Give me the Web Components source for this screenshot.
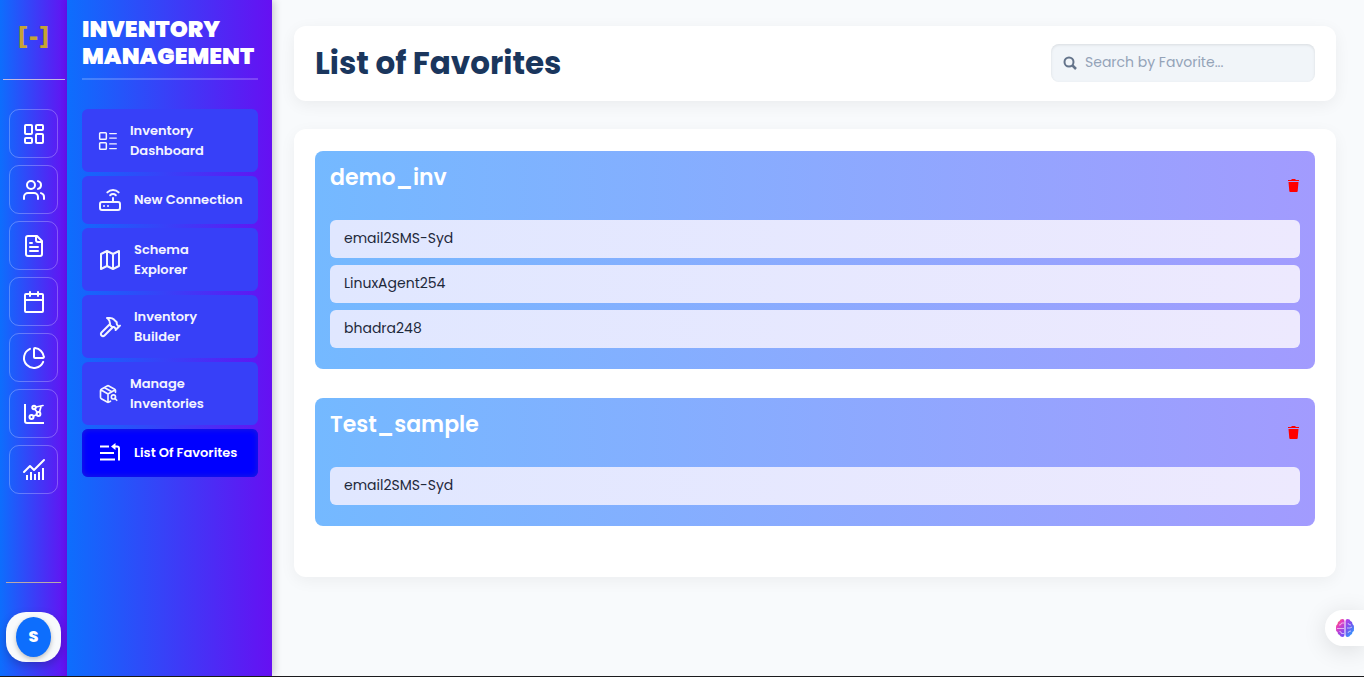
<!DOCTYPE html>
<html lang="en">
<head>
<meta charset="utf-8">
<meta name="viewport" content="width=device-width, initial-scale=1">
<title>Inventory Management</title>
<style>
html, body { margin: 0; }
body { font-family: Poppins, Inter, "Open Sans", sans-serif; background: #f8fafc; color: #1e293b; }
</style>
</head>
<body>
<inv-app>
  <inv-rail slot="rail">
    <rail-link label="Dashboard" icon="dashboard"></rail-link>
    <rail-link label="Users" icon="users"></rail-link>
    <rail-link label="Documents" icon="file"></rail-link>
    <rail-link label="Calendar" icon="calendar"></rail-link>
    <rail-link label="Reports" icon="pie"></rail-link>
    <rail-link label="Network" icon="network"></rail-link>
    <rail-link label="Analytics" icon="bars"></rail-link>
  </inv-rail>
  <inv-menu slot="menu">
    <menu-link icon="list" size="small" lines="2">Inventory Dashboard</menu-link>
    <menu-link icon="router">New Connection</menu-link>
    <menu-link icon="map" lines="2">Schema Explorer</menu-link>
    <menu-link icon="hammer" lines="2">Inventory Builder</menu-link>
    <menu-link icon="package" size="small" lines="2">Manage Inventories</menu-link>
    <menu-link icon="favorites" current>List Of Favorites</menu-link>
  </inv-menu>
  <page-header>List of Favorites</page-header>
  <favorite-board>
    <favorite-group name="demo_inv">
      <favorite-item>email2SMS-Syd</favorite-item>
      <favorite-item>LinuxAgent254</favorite-item>
      <favorite-item>bhadra248</favorite-item>
    </favorite-group>
    <favorite-group name="Test_sample">
      <favorite-item>email2SMS-Syd</favorite-item>
    </favorite-group>
  </favorite-board>
  <assistant-tab slot="assistant"></assistant-tab>
</inv-app>

<script>
const stroke = (body, w = 2) => `<svg viewBox="0 0 24 24" fill="none" stroke="currentColor" stroke-width="${w}" stroke-linecap="round" stroke-linejoin="round" aria-hidden="true">${body}</svg>`;
const ICONS = {
  dashboard: stroke('<rect x="3" y="3" width="7" height="9" rx="1"/><rect x="14" y="3" width="7" height="5" rx="1"/><rect x="14" y="12" width="7" height="9" rx="1"/><rect x="3" y="16" width="7" height="5" rx="1"/>'),
  users: stroke('<path d="M16 21v-2a4 4 0 0 0-4-4H6a4 4 0 0 0-4 4v2"/><circle cx="9" cy="7" r="4"/><path d="M22 21v-2a4 4 0 0 0-3-3.87M16 3.13a4 4 0 0 1 0 7.75"/>'),
  file: stroke('<path d="M15 2H6a2 2 0 0 0-2 2v16a2 2 0 0 0 2 2h12a2 2 0 0 0 2-2V7zM14 2v4a2 2 0 0 0 2 2h4M10 9H8M16 13H8M16 17H8"/>'),
  calendar: stroke('<rect x="3" y="4" width="18" height="18" rx="1"/><path d="M8 2v4M16 2v4M3 10h18"/>'),
  pie: stroke('<path d="M21 12c.6 0 1-.5.9-1A10 10 0 0 0 13 2.100c-.5 0-1 .4-1 .9v8a1 1 0 0 0 1 1z"/><path d="M21.200 15.900A10 10 0 1 1 8 2.800"/>'),
  network: stroke('<path d="M3 2v17q0 2 2 2h17" stroke-linecap="butt"/><circle cx="12" cy="5.500" r="1.700"/><circle cx="9.500" cy="15" r="2"/><circle cx="16.500" cy="12" r="1.900"/><path d="M14 5l7-1.500M13 7.500l2.500 3M11.500 14l3-1.200M17.500 10l1.500-5.500" stroke-width="1.700"/>'),
  bars: stroke('<path d="M2 14l6-6 4 4L22 2"/><path d="M5 17v5M9 14v8M13 16v6M17 14v8M21 10v12" stroke-linecap="butt"/>'),
  list: stroke('<rect x="2" y="2" width="8" height="8" rx="1"/><rect x="2" y="14" width="8" height="8" rx="1"/><path d="M14 3h8M14 8.500h8M14 15.500h8M14 21h8" stroke-width="1.500"/>', 1.8),
  router: stroke('<rect x="2" y="14" width="20" height="8" rx="2"/><path d="M6 18h.01M10 18h.01M15 10v4M17.840 7.170a4 4 0 0 0-5.660 0M20.660 4.340a8 8 0 0 0-11.310 0"/>'),
  map: stroke('<path d="M3 6l6-3 6 3 6-3v15l-6 3-6-3-6 3zM9 3v15M15 6v15"/>'),
  hammer: stroke('<path d="M15 12l-8.500 8.500a2.100 2.100 0 1 1-3-3L12 9M17.600 15L22 10.600M20.900 11.700l-1.300-1.300c-.6-.6-.9-1.300-.9-2.200v-.9L16 4.600A6 6 0 0 0 11.800 3H9l1 .8A6 6 0 0 1 12 8.400v1.600l2 2h2l2 2"/>'),
  package: stroke('<path d="M21 10V8a2 2 0 0 0-1-1.700l-7-4a2 2 0 0 0-2 0l-7 4A2 2 0 0 0 3 8v8a2 2 0 0 0 1 1.700l7 4a2 2 0 0 0 2 0l2-1.100M7.500 4.300l9 5.100M3.300 7L12 12l8.700-5M12 22V12"/><circle cx="18.500" cy="15.500" r="2.500"/><path d="M20.300 17.300L22.500 19.500"/>'),
  favorites: stroke('<path d="M2 5.500h9M2 12h14M2 18.500h15M16 5.500h3q2 0 2 2v12" stroke-linecap="butt"/><path d="M17.500 2l-4.500 3.500 4.500 3.500z" fill="currentColor" stroke="none"/>')
};

class Base extends HTMLElement {
  connectedCallback() {
    if (this.shadowRoot) return;
    this.attachShadow({ mode: "open" }).innerHTML = this.render();
  }
}

customElements.define("inv-app", class extends Base {
  render() {
    return `<style>
      :host { box-sizing: border-box; display: grid; grid-template-columns: 67px 205px minmax(0, 1fr); min-height: 100vh; border-bottom: 1px solid #1b1b1d; background: #f8fafc; }
      nav { display: grid; grid-template-columns: minmax(0, 1fr); background: linear-gradient(90deg, #0d6efd, #6610f2); }
      .menu { box-shadow: 2px 0 8px rgba(0, 0, 0, .2); }
      main { padding: 26px 28px 26px 22px; display: flex; flex-direction: column; gap: 28px; }
    </style>
    <nav aria-label="Main"><slot name="rail"></slot></nav>
    <nav class="menu" aria-label="Inventory"><slot name="menu"></slot></nav>
    <main><slot></slot></main>
    <slot name="assistant"></slot>`;
  }
});

customElements.define("inv-rail", class extends Base {
  render() {
    return `<style>
      :host { display: flex; flex-direction: column; align-items: center; }
      .logo { box-sizing: border-box; width: 62px; height: 80px; padding-top: 24px; border-bottom: 1px solid #c4b8e0; text-align: center; font: 700 24px/26px "DejaVu Sans", sans-serif; color: #c6a433; }
      .links { display: flex; flex-direction: column; gap: 7px; margin-top: 29px; }
      .user { margin-top: auto; padding: 29px 0 14px; border-top: 1px solid #b9a9a9; }
      button { display: grid; place-items: center; width: 55px; height: 50px; padding: 0; border: 0; border-radius: 20px; background: #f8fafc; box-shadow: 0 4px 10px rgba(0, 0, 0, .2); }
      button span { display: grid; place-items: center; width: 35px; height: 40px; border-radius: 50%; background: #0d6efd; color: #fff; font: 800 16px/24px Poppins, Inter, sans-serif; box-shadow: 0 2px 5px rgba(0, 0, 0, .25); }
    </style>
    <div class="logo">[-]</div>
    <div class="links"><slot></slot></div>
    <div class="user"><button type="button" aria-label="Account"><span>S</span></button></div>`;
  }
});

customElements.define("rail-link", class extends Base {
  render() {
    return `<style>
      :host { display: block; }
      a { box-sizing: border-box; display: grid; place-items: center; width: 49px; height: 49px; border: 1px solid rgba(255, 255, 255, .27); border-radius: 10px; color: #fff; }
      svg { width: 24px; height: 24px; }
    </style>
    <a href="#" aria-label="${this.getAttribute("label")}">${ICONS[this.getAttribute("icon")]}</a>`;
  }
});

customElements.define("inv-menu", class extends Base {
  render() {
    return `<style>
      :host { display: block; padding: 16px 14px 16px 15px; }
      h2 { margin: 0; padding-bottom: 8px; border-bottom: 2px solid rgba(255, 255, 255, .2); font-size: 23px; line-height: 27px; font-weight: 900; color: #fff; }
      .links { display: flex; flex-direction: column; gap: 4px; margin-top: 29px; }
    </style>
    <h2>INVENTORY MANAGEMENT</h2>
    <div class="links"><slot></slot></div>`;
  }
});

customElements.define("menu-link", class extends Base {
  render() {
    return `<style>
      :host { display: block; }
      a { box-sizing: border-box; display: flex; align-items: center; gap: 12px; min-height: 48px; padding: 4px 8px 4px 16px; border-radius: 6px; background: #3740f8; color: #f3f4ff; text-decoration: none; font-size: 13px; line-height: 20px; font-weight: 600; white-space: nowrap; }
      :host([lines="2"]) a { min-height: 63px; padding-right: 32px; white-space: normal; }
      :host([current]) a { background: #0000ff; color: #fff; box-shadow: inset 0 0 6px #2020d8; }
      svg { flex: none; width: 24px; height: 24px; }
      :host([size="small"]) svg { width: 20px; height: 20px; }
    </style>
    <a href="#"${this.hasAttribute("current") ? ' aria-current="page"' : ""}>${ICONS[this.getAttribute("icon")]}<span><slot></slot></span></a>`;
  }
});

customElements.define("page-header", class extends Base {
  render() {
    return `<style>
      :host { box-sizing: border-box; display: flex; align-items: center; justify-content: space-between; gap: 20px; min-height: 75px; padding: 11px 21px 13px; border-radius: 12px; background: #fff; box-shadow: 0 4px 16px rgba(0, 0, 0, .06); }
      h1 { margin: 0; font-size: 31px; line-height: 40px; font-weight: 700; color: #1a365d; }
      label { box-sizing: border-box; display: flex; align-items: center; gap: 8px; flex: 0 1 264px; min-width: 0; height: 38px; padding: 0 12px; border-radius: 8px; background: #f1f5f9; box-shadow: inset 0 1px 3px rgba(0, 0, 0, .1); color: #64748b; }
      svg { flex: none; width: 14px; height: 14px; }
      input { width: 100%; min-width: 0; padding: 0 0 2px; border: 0; outline: 0; background: none; font: 400 14px/24px Poppins, Inter, sans-serif; color: #1e293b; }
      input::placeholder { color: #94a3b8; opacity: 1; }
    </style>
    <h1><slot></slot></h1>
    <label><svg viewBox="0 0 14 14" fill="none" stroke="currentColor" stroke-width="2" aria-hidden="true"><circle cx="6" cy="6" r="4.500"/><path d="M9 9l4 4" stroke-width="2.500"/></svg>
      <input type="text" aria-label="Search by Favorite" placeholder="Search by Favorite..."></label>`;
  }
});

customElements.define("favorite-board", class extends Base {
  render() {
    return `<style>
      :host { display: flex; flex-direction: column; gap: 29px; padding: 22px 21px 51px; border-radius: 12px; background: #fff; box-shadow: 0 4px 16px rgba(0, 0, 0, .05); }
    </style><slot></slot>`;
  }
});

customElements.define("favorite-group", class extends Base {
  render() {
    return `<style>
      :host { display: block; padding: 0 15px 21px; border-radius: 8px; background: linear-gradient(90deg, #74b9ff, #a29bfe); }
      header { display: flex; align-items: center; justify-content: space-between; height: 69px; }
      h2 { margin: 0; padding-bottom: 16px; font-size: 22px; line-height: 28px; font-weight: 600; color: #fff; }
      button { display: grid; padding: 0; border: 0; background: none; color: #f00; }
      svg { width: 14px; height: 14px; }
      .items { display: flex; flex-direction: column; gap: 7px; }
    </style>
    <header><h2>${this.getAttribute("name")}</h2>
      <button type="button" aria-label="Delete ${this.getAttribute("name")}"><svg viewBox="0 0 14 14" fill="currentColor" aria-hidden="true"><path d="M2 1h3.500V0h4v1H13v1H2zM2.500 3h10l-.8 9q0 1-1 1H4.300q-1 0-1-1z"/></svg></button>
    </header>
    <div class="items" role="list"><slot></slot></div>`;
  }
});

customElements.define("favorite-item", class extends Base {
  render() {
    this.setAttribute("role", "listitem");
    return `<style>
      :host { display: block; padding: 6px 14px 8px; border-radius: 6px; background: linear-gradient(90deg, #e0e7ff, #ede9fe); font-size: 14px; line-height: 24px; font-weight: 400; color: #1e293b; }
    </style><slot></slot>`;
  }
});

customElements.define("assistant-tab", class extends Base {
  render() {
    return `<style>
      :host { position: fixed; right: 0; bottom: 31px; }
      button { display: flex; align-items: center; width: 39px; height: 36px; padding: 0 0 0 10px; border: 0; border-radius: 18px 0 0 18px; background: #fff; box-shadow: 0 4px 24px rgba(0, 0, 0, .12); }
      svg { width: 20px; height: 20px; }
    </style>
    <button type="button" aria-label="Open assistant"><svg viewBox="0 0 20 20" aria-hidden="true">
      <defs><linearGradient id="l" x1="0" y1="0" x2=".6" y2="1"><stop offset="0" stop-color="#ff8a2a"/><stop offset=".4" stop-color="#e63bbd"/><stop offset="1" stop-color="#7a4df5"/></linearGradient>
      <linearGradient id="r" x1="0" y1="0" x2=".6" y2="1"><stop offset="0" stop-color="#c23be6"/><stop offset=".5" stop-color="#7355ee"/><stop offset="1" stop-color="#2f9bff"/></linearGradient></defs>
      <path fill="url(#l)" d="M9.500 3Q9.500 1 7.500 1 5 1 4.500 3 2.500 3.500 2.500 6 .5 7.500 1 10q-.5 3 1.500 4 0 2.500 2 3Q5.500 19 7.500 19q2 0 2-2z"/>
      <path fill="url(#r)" d="M10.500 3q0-2 2-2Q15 1 15.500 3q2 .5 2 3 2 1.500 1.500 4 .5 3-1.500 4 0 2.500-2 3-1 2-3 2-2 0-2-2z"/>
      <path fill="none" stroke="#fff" stroke-width="1" stroke-opacity=".6" d="M4 7q2 .5 2.500-2H9M2 10.500h7M4.500 13.500q2 0 2 2H9M13 5q0 2 3 2M12 10h3l2-1M13 15q0-2 3-2"/>
    </svg></button>`;
  }
});
</script>
</body>
</html>
